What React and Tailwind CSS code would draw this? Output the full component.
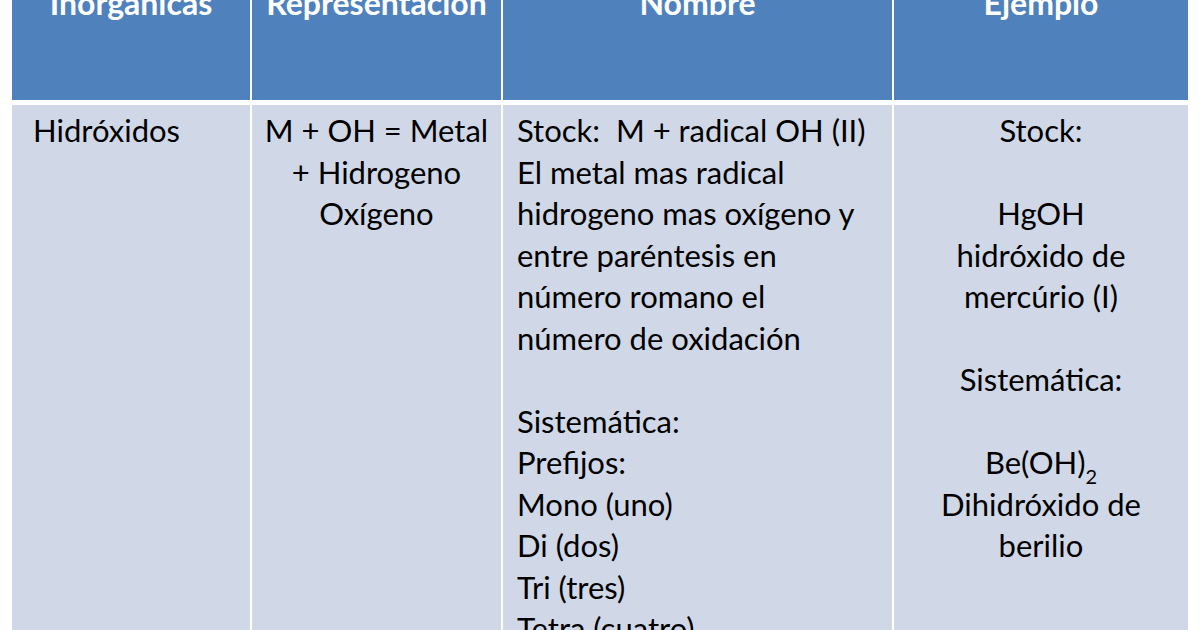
export default function App() {
  const font = { fontFamily: 'Lato, "Open Sans", sans-serif' };

  const headers = ['Inorgánicas', 'Representación', 'Nombre', 'Ejemplo'];

  return (
    <div className="w-[1200px] h-[630px] overflow-hidden bg-white" style={font}>
      <div className="ml-[12px] w-[1176px] grid grid-cols-[238px_249px_389px_294px] gap-x-[2px] gap-y-[5px] bg-white">
        {/* encabezado */}
        {headers.map((h) => (
          <div key={h} className="h-[100px] bg-[#4f81bd] overflow-hidden">
            <div className="-mt-[16px] text-center text-white font-bold text-[32px] leading-[38px]">{h}</div>
          </div>
        ))}

        {/* fila Hidróxidos */}
        <div className="h-[540px] bg-[#d0d8e8] pt-[5px] pl-[21px] text-[31px] leading-[41.5px] text-black">
          Hidróxidos
        </div>
        <div className="bg-[#d0d8e8] pt-[5px] text-center text-[31px] leading-[41.5px] text-black">
          M + OH = Metal
          <br />+ Hidrogeno
          <br />Oxígeno
        </div>
        <div className="bg-[#d0d8e8] pt-[5px] pl-[14px] text-[31px] leading-[41.5px] text-black whitespace-pre">
          {'Stock:  M + radical OH (II)\nEl metal mas radical\nhidrogeno mas oxígeno y\nentre paréntesis en\nnúmero romano el\nnúmero de oxidación\n\nSistemática:\nPrefijos:\nMono (uno)\nDi (dos)\nTri (tres)\nTetra (cuatro)'}
        </div>
        <div className="bg-[#d0d8e8] pt-[5px] text-center text-[31px] leading-[41.5px] text-black">
          Stock:
          <br />
          <br />HgOH
          <br />hidróxido de
          <br />mercúrio (I)
          <br />
          <br />Sistemática:
          <br />
          <br />Be(OH)<sub className="text-[20px] leading-none align-[-5px]">2</sub>
          <br />Dihidróxido de
          <br />berilio
        </div>
      </div>
    </div>
  );
}
